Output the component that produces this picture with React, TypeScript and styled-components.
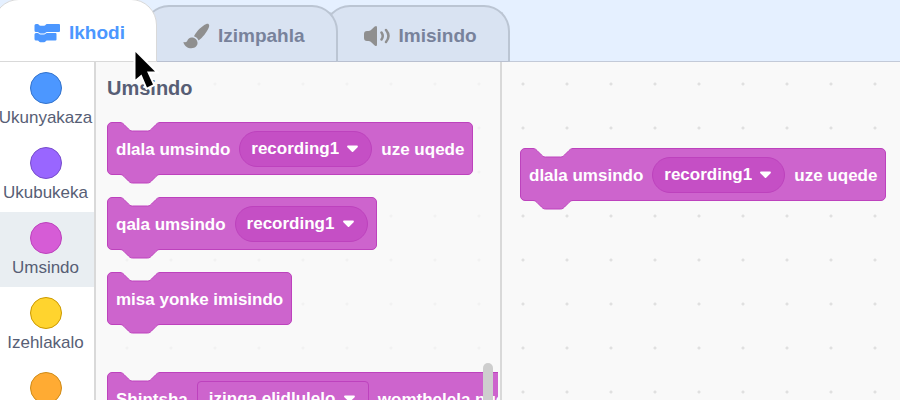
import React from "react";
import styled, { createGlobalStyle } from "styled-components";

const BLOCK = "#cd64cd";
const EDGE = "#bd42bd";
const CANVAS = "#f9f9f9";

const GlobalStyle = createGlobalStyle`
  * { box-sizing: border-box; }
  body { margin: 0; overflow: hidden; }
  button, select { font: inherit; color: inherit; border: 0; margin: 0; background: none; }
`;

const Page = styled.div`
  position: relative;
  display: flex;
  flex-direction: column;
  height: 100vh;
  overflow: hidden;
  background: #e5f0ff;
  color: #575e75;
  font-family: "Liberation Sans", Helvetica, Arial, sans-serif;
`;

const TabBar = styled.div`
  display: flex;
  align-items: flex-end;
  flex: none;
  height: 62px;
  border-bottom: 1px solid #c3cad8;
  isolation: isolate;
`;

const Tab = styled.button<{ $active?: boolean; $order: number }>`
  position: relative;
  z-index: ${(p) => p.$order};
  display: flex;
  flex: none;
  align-items: center;
  gap: 8px;
  height: ${(p) => (p.$active ? 63 : 57)}px;
  margin: 0 0 -1px ${(p) => (p.$active ? -7 : -14)}px;
  padding: ${(p) => (p.$active ? "4px 31px 0 40px" : "4px 31px 0 38px")};
  border: ${(p) => (p.$active ? "1px solid #d9d9d9" : "2px solid #bbc5d3")};
  border-bottom: 1px solid ${(p) => (p.$active ? "#d9d9d9" : "#b9c0d0")};
  border-radius: 26px 26px 0 0;
  background: ${(p) => (p.$active ? "#ffffff" : "#d9e3f2")};
  color: ${(p) => (p.$active ? "#4c97ff" : "#78829b")};
  font-size: 19px;
  font-weight: 700;
`;

const Editor = styled.main`
  display: flex;
  flex: 1;
  min-height: 0;
`;

const Categories = styled.nav`
  flex: none;
  width: 96px;
  border-right: 2px solid #d9d9d9;
  background: #ffffff;
`;

const Category = styled.button<{ $selected?: boolean }>`
  display: flex;
  flex-direction: column;
  align-items: center;
  gap: 4px;
  width: 100%;
  height: 75px;
  padding: 10px 3px 0 0;
  background: ${(p) => (p.$selected ? "#e9eef2" : "transparent")};
  font-size: 17px;
  line-height: 20px;
`;

const Bubble = styled.span<{ $fill: string; $edge: string }>`
  flex: none;
  width: 32px;
  height: 32px;
  border: 1px solid ${(p) => p.$edge};
  border-radius: 50%;
  background: ${(p) => p.$fill};
`;

const Palette = styled.section`
  position: relative;
  flex: none;
  width: 406px;
  padding: 14px 0 0 11px;
  overflow: hidden;
  border-right: 2px solid #d9d9d9;
  background: radial-gradient(circle, #f2f2f2 1px, transparent 2px) 9px 0 / 44px 44px ${CANVAS};
`;

const PaletteTitle = styled.h2`
  margin: 0 0 22px;
  font-size: 20px;
  line-height: 24px;
  font-weight: 700;
`;

const BlockList = styled.div`
  display: flex;
  flex-direction: column;
  align-items: flex-start;
  gap: 22px;
  margin-right: 2px;
  overflow: hidden;
`;

const BlockBody = styled.div<{ $spaced?: boolean }>`
  position: relative;
  display: flex;
  flex: none;
  align-items: center;
  gap: 9px;
  height: 53px;
  margin-top: ${(p) => (p.$spaced ? 25 : 0)}px;
  padding: 0 8px;
  border: 1px solid ${EDGE};
  border-radius: 5px;
  background: ${BLOCK};
  color: #ffffff;
  font-size: 17px;
  line-height: 20px;
  font-weight: 700;
  white-space: nowrap;
`;

const BlockText = styled.span`
  padding-top: 2px;
`;

const Notch = styled.svg<{ $bottom?: boolean }>`
  position: absolute;
  left: 12px;
  ${(p) => (p.$bottom ? "bottom: -10px;" : "top: -1px;")}
`;

const Field = styled.label<{ $square?: boolean }>`
  display: grid;
  align-items: center;
  height: 36px;
  border: 1px solid ${EDGE};
  border-radius: ${(p) => (p.$square ? 4 : 18)}px;
  background: ${(p) => (p.$square ? BLOCK : "#c54fc5")};
`;

const FieldSelect = styled.select`
  grid-area: 1 / 1;
  appearance: none;
  height: 34px;
  padding: 0 32px 0 11px;
`;

const FieldArrow = styled.svg`
  grid-area: 1 / 1;
  justify-self: end;
  margin-right: 12px;
  pointer-events: none;
`;

const ScrollThumb = styled.div`
  position: absolute;
  top: 301px;
  right: 7px;
  bottom: -8px;
  width: 10px;
  border-radius: 5px;
  background: #cecece;
`;

const Workspace = styled.section`
  flex: 1;
  min-width: 0;
  padding: 86px 0 0 18px;
  overflow: hidden;
  background: radial-gradient(circle, #e0e0e0 1px, transparent 2px) -1px 0 / 44px 44px ${CANVAS};
`;

const WorkspaceStack = styled.div`
  display: flex;
  width: max-content;
`;

const Pointer = styled.svg`
  position: absolute;
  left: 131px;
  top: 44px;
  z-index: 5;
  pointer-events: none;
`;

const NOTCH_PATH = "M0 0.5c2 0 3 1 4 2l4.500 4.500c1 1 2 2 4 2h15c2 0 3 -1 4 -2l4.500 -4.500c1 -1 2 -2 4 -2";

type BlockProps = { before: string; option?: string; after?: string; square?: boolean; spaced?: boolean };

function Block({ before, option, after, square, spaced }: BlockProps) {
  return (
    <BlockBody $spaced={spaced}>
      <Notch width="40" height="10" viewBox="0 0 40 10" aria-hidden="true">
        <path d={NOTCH_PATH + "V0H0z"} fill={CANVAS} />
        <path d={NOTCH_PATH} fill="none" stroke={EDGE} />
      </Notch>
      <BlockText>{before}</BlockText>
      {option && (
        <Field $square={square}>
          <FieldSelect aria-label={before}>
            <option>{option}</option>
          </FieldSelect>
          <FieldArrow width="13" height="9" viewBox="0 0 13 9" aria-hidden="true">
            <path d="M2 2.500h9L6.500 7z" fill="#fff" stroke="#fff" strokeWidth="1.800" strokeLinejoin="round" />
          </FieldArrow>
        </Field>
      )}
      {after && <BlockText>{after}</BlockText>}
      <Notch $bottom width="40" height="10" viewBox="0 0 40 10" aria-hidden="true">
        <path d={NOTCH_PATH + "V0H0z"} fill={BLOCK} />
        <path d={NOTCH_PATH} fill="none" stroke={EDGE} />
      </Notch>
    </BlockBody>
  );
}

function CodeIcon() {
  return (
    <svg width="27" height="20" viewBox="0 0 27 20" fill="currentColor" aria-hidden="true">
      <path d="M.5 2.500Q.5 1 2 1H3.500C5 1 5 2.800 6.500 2.800H10C11.500 2.800 11.500 1 13 1H25Q26 1 26 2V8Q26 9 25 9H13C11.500 9 11.500 10.500 10 10.500H6.500C5 10.500 5 9 3.500 9H2Q.5 9 .5 7.500Z" />
      <path d="M.5 11.500Q.5 10 2 10H3.500C5 10 5 11.500 6.500 11.500H10C11.500 11.500 11.500 10 13 10H21.500Q22.500 10 22.500 11V16.500Q22.500 17.500 21.500 17.500H13C11.500 17.500 11.500 19.300 10 19.300H6.500C5 19.300 5 17.500 3.500 17.500H2Q.5 17.500 .5 16Z" />
    </svg>
  );
}

function BrushIcon() {
  return (
    <svg width="27" height="27" viewBox="0 0 27 27" fill="#8f8f8f" aria-hidden="true">
      <path d="M25.700 1.200c-1-1-2.700-.2-4.400.8C17 4.800 12.500 9.700 11 13.300c2.100.7 3.700 2.100 4.600 4.200C19.500 14.700 24 9 25.800 4.500c.5-1.300.6-2.600-.1-3.300z" />
      <path d="M10 14.600c-2.800-.7-5 .8-5.600 3-.4 1.400-1.600 2-3.400 1.500-.5 0-.6.4-.4.8 1 3 4 5.400 7.700 5.400 4.200 0 6.500-2.700 6.200-5.700-.2-2.600-2.100-4.400-4.500-5z" />
    </svg>
  );
}

function SpeakerIcon() {
  return (
    <svg width="27" height="22" viewBox="0 0 27 22" aria-hidden="true">
      <path d="M0 9Q0 6 3 6h1.500q1.200 0 2.200-.8l4-3.600Q13 0 13 2.500v17q0 2.500-2.300.9l-4-3.600Q5.700 16 4.500 16H3q-3 0-3-3z" fill="#8f8f8f" />
      <path d="M17.500 7.500q2.500 3.500 0 7M22 5q5 6 0 12" fill="none" stroke="#8f8f8f" strokeWidth="2.500" strokeLinecap="round" />
    </svg>
  );
}

const CATEGORIES = [
  { name: "Ukunyakaza", fill: "#4c97ff", edge: "#3373cc" },
  { name: "Ukubukeka", fill: "#9966ff", edge: "#774dcb" },
  { name: "Umsindo", fill: "#d65cd6", edge: "#bd42bd" },
  { name: "Izehlakalo", fill: "#ffd42e", edge: "#cc9900" },
  { name: "Ukulawula", fill: "#ffab33", edge: "#cf8b17" },
];

export default function App() {
  return (
    <Page>
      <GlobalStyle />
      <TabBar role="tablist">
        <Tab role="tab" aria-selected="true" $active $order={3}>
          <CodeIcon />
          Ikhodi
        </Tab>
        <Tab role="tab" aria-selected="false" $order={2}>
          <BrushIcon />
          Izimpahla
        </Tab>
        <Tab role="tab" aria-selected="false" $order={1}>
          <SpeakerIcon />
          Imisindo
        </Tab>
      </TabBar>
      <Editor>
        <Categories>
          {CATEGORIES.map((c) => (
            <Category key={c.name} $selected={c.name === "Umsindo"}>
              <Bubble $fill={c.fill} $edge={c.edge} />
              {c.name}
            </Category>
          ))}
        </Categories>
        <Palette>
          <PaletteTitle>Umsindo</PaletteTitle>
          <BlockList>
            <Block before="dlala umsindo" option="recording1" after="uze uqede" />
            <Block before="qala umsindo" option="recording1" />
            <Block before="misa yonke imisindo" />
            <Block before="Shintsha" option="izinga elidlulelo" after="womthelela ngo" square spaced />
          </BlockList>
          <ScrollThumb />
        </Palette>
        <Workspace>
          <WorkspaceStack>
            <Block before="dlala umsindo" option="recording1" after="uze uqede" />
          </WorkspaceStack>
        </Workspace>
      </Editor>
      <Pointer width="34" height="50" viewBox="0 0 34 50" aria-hidden="true">
        <path
          d="M4.500 8v27.500l6-5 5.500 13 6-3-6-13h8z"
          fill="#000"
          stroke="#fff"
          strokeWidth="4"
          paintOrder="stroke"
        />
      </Pointer>
    </Page>
  );
}
